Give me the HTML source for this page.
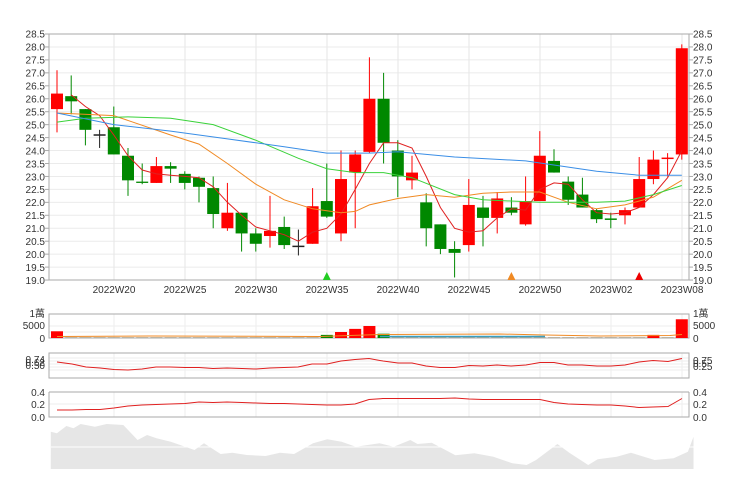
<!DOCTYPE html>
<html><head><meta charset="utf-8"><style>
html,body{margin:0;padding:0;background:#fff;width:740px;height:495px;overflow:hidden}
svg{display:block}
text{font-family:"Liberation Sans","Noto Sans CJK TC",sans-serif;font-size:10px;fill:#333}
</style></head><body>
<svg id="s" width="740" height="495" xmlns="http://www.w3.org/2000/svg">
<g id="grid"></g>
<g text-anchor="end">
<text x="45" y="37.5">28.5</text><text x="45" y="50.5">28.0</text><text x="45" y="63.5">27.5</text><text x="45" y="76.5">27.0</text><text x="45" y="89.5">26.5</text><text x="45" y="102.5">26.0</text><text x="45" y="115.5">25.5</text><text x="45" y="128.5">25.0</text><text x="45" y="141.5">24.5</text><text x="45" y="154.5">24.0</text><text x="45" y="167.5">23.5</text><text x="45" y="180.5">23.0</text><text x="45" y="193">22.5</text><text x="45" y="206">22.0</text><text x="45" y="219">21.5</text><text x="45" y="232">21.0</text><text x="45" y="245">20.5</text><text x="45" y="258">20.0</text><text x="45" y="271">19.5</text><text x="45" y="284">19.0</text>
<text x="45" y="317">1萬</text><text x="45" y="329">5000</text><text x="45" y="342">0</text>
<text x="45" y="363" font-size="9">0.74</text><text x="45" y="366" font-size="9">0.62</text><text x="45" y="369" font-size="9">0.50</text>
<text x="45" y="396">0.4</text><text x="45" y="408">0.2</text><text x="45" y="421">0.0</text>
</g>
<g>
<text x="693" y="37.5">28.5</text><text x="693" y="50.5">28.0</text><text x="693" y="63.5">27.5</text><text x="693" y="76.5">27.0</text><text x="693" y="89.5">26.5</text><text x="693" y="102.5">26.0</text><text x="693" y="115.5">25.5</text><text x="693" y="128.5">25.0</text><text x="693" y="141.5">24.5</text><text x="693" y="154.5">24.0</text><text x="693" y="167.5">23.5</text><text x="693" y="180.5">23.0</text><text x="693" y="193">22.5</text><text x="693" y="206">22.0</text><text x="693" y="219">21.5</text><text x="693" y="232">21.0</text><text x="693" y="245">20.5</text><text x="693" y="258">20.0</text><text x="693" y="271">19.5</text><text x="693" y="284">19.0</text>
<text x="693" y="317">1萬</text><text x="693" y="329">5000</text><text x="693" y="342">0</text>
<text x="693" y="364" font-size="9">0.75</text><text x="693" y="367" font-size="9">0.5</text><text x="693" y="370" font-size="9">0.25</text>
<text x="693" y="396">0.4</text><text x="693" y="408">0.2</text><text x="693" y="421">0.0</text>
</g>
<g text-anchor="middle">
<text x="114" y="293">2022W20</text><text x="185" y="293">2022W25</text><text x="256" y="293">2022W30</text><text x="327" y="293">2022W35</text><text x="398" y="293">2022W40</text><text x="469" y="293">2022W45</text><text x="540" y="293">2022W50</text><text x="611" y="293">2023W02</text><text x="682" y="293">2023W08</text>
</g>
<g id="plot"></g>
</svg>
<script>
var NS="http://www.w3.org/2000/svg",g=document.getElementById('grid'),P=document.getElementById('plot');
function el(p,t,a){var e=document.createElementNS(NS,t);for(var k in a)e.setAttribute(k,a[k]);p.appendChild(e);return e;}
function Y(p){return 34+(28.5-p)*25.9;}
function X(i){return 57+i*14.2;}
// grids
for(var v=19;v<=28.5;v+=0.5)el(g,'line',{x1:49,x2:689,y1:Y(v),y2:Y(v),stroke:'#ebebeb'});
var vx=[114,185,256,327,398,469,540,611,682];
vx.forEach(function(x){el(g,'line',{x1:x,x2:x,y1:34,y2:280,stroke:'#e6e6e6'});
 el(g,'line',{x1:x,x2:x,y1:314,y2:338,stroke:'#eee'});el(g,'line',{x1:x,x2:x,y1:353,y2:378,stroke:'#eee'});el(g,'line',{x1:x,x2:x,y1:392,y2:417,stroke:'#eee'});});
[326,332].forEach(function(y){el(g,'line',{x1:49,x2:689,y1:y,y2:y,stroke:'#eee'});});
[358,361,364,367,370].forEach(function(y){el(g,'line',{x1:49,x2:689,y1:y,y2:y,stroke:'#eee'});});
[404].forEach(function(y){el(g,'line',{x1:49,x2:689,y1:y,y2:y,stroke:'#eee'});});
// frames
el(g,'path',{d:'M49 34H689M49 34V280H689V34',fill:'none',stroke:'#aaa'});
for(var v=19;v<=28.5;v+=0.5){el(g,'line',{x1:45,x2:49,y1:Y(v),y2:Y(v),stroke:'#aaa'});el(g,'line',{x1:689,x2:693,y1:Y(v),y2:Y(v),stroke:'#aaa'});}
el(g,'rect',{x:49,y:314,width:640,height:24,fill:'none',stroke:'#aaa'});
el(g,'rect',{x:49,y:353,width:640,height:25,fill:'none',stroke:'#aaa'});
el(g,'path',{d:'M49 392V417H689V392M49 392H689',fill:'none',stroke:'#aaa'});
// area
var ar=[[107,395],[120,400],[140,378],[155,385],[170,372],[200,380],[225,372],[260,375],[290,420],[310,405],[330,415],[360,425],[410,450],[430,430],[465,462],[490,458],[520,465],[560,468],[590,458],[620,462],[660,430],[690,418],[720,425],[750,440],[800,430],[830,440],[865,420],[880,432],[910,428],[960,466],[1000,460],[1040,470],[1080,490],[1110,495],[1130,480],[1175,432],[1200,458],[1240,495],[1260,478],[1300,470],[1330,458],[1380,480],[1420,475],[1450,455],[1462,410]];
var d='M'+(107/2.108)+' 469';ar.forEach(function(p){d+=' L'+(p[0]/2.108).toFixed(1)+' '+(300+p[1]/3).toFixed(1);});d+=' L'+(1462/2.108)+' 469Z';
el(P,'path',{d:d,fill:'#e6e6e6'});
el(P,'line',{x1:51,x2:694,y1:447,y2:447,stroke:'#fff','stroke-width':1});
// candles [o,c,h,l,color]
var R='#f00',G='#080',K='#222';
var c=[[25.6,26.2,27.1,24.7,R],[26.1,25.9,26.9,25.4,G],[25.6,24.8,25.6,24.2,G],[24.6,24.6,24.8,24.1,K],[24.9,23.85,25.7,23.85,G],[23.8,22.85,24.1,22.25,G],[22.8,22.75,23.5,22.7,G],[22.75,23.4,23.75,22.75,R],[23.4,23.3,23.55,22.75,G],[23.1,22.75,23.2,22.5,G],[22.95,22.6,23.0,22.0,G],[22.55,21.55,23.0,21.0,G],[21.0,21.6,22.75,20.9,R],[21.6,20.8,21.6,20.1,G],[20.8,20.4,21.0,20.1,G],[20.7,20.9,22.25,20.25,R],[21.05,20.35,21.45,20.2,G],[20.3,20.3,20.95,19.95,K],[20.4,21.85,22.55,20.4,R],[22.05,21.45,23.5,21.4,G],[20.8,22.9,24.0,20.5,R],[23.15,23.85,24.0,21.0,R],[23.95,26.0,27.6,23.9,R],[26.0,24.3,27.0,23.5,G],[24.0,23.0,24.4,22.2,G],[22.85,23.15,23.8,22.5,R],[22.0,21.0,22.35,20.3,G],[21.15,20.2,21.15,20.0,G],[20.2,20.05,20.5,19.1,G],[20.35,21.9,22.9,20.1,R],[21.8,21.4,22.25,20.3,G],[21.4,22.15,22.4,20.8,R],[21.8,21.6,22.2,21.5,G],[21.15,22.05,23.0,21.1,R],[22.05,23.8,24.75,22.05,R],[23.6,23.15,24.05,23.15,G],[22.8,22.1,23.0,21.9,G],[22.3,21.8,22.95,21.8,G],[21.7,21.35,21.75,21.2,G],[21.35,21.35,21.6,21.0,G],[21.5,21.7,21.8,21.15,R],[21.8,22.9,23.75,21.8,R],[22.9,23.65,24.0,22.7,R],[23.7,23.7,23.9,23.0,R],[23.85,27.95,28.1,23.65,R]];
c.forEach(function(k,i){var x=X(i),t=Math.max(k[0],k[1]),b=Math.min(k[0],k[1]);
 el(P,'line',{x1:x,x2:x,y1:Y(k[2]),y2:Y(k[3]),stroke:k[4],'stroke-width':1});
 if(t-b<0.02){el(P,'line',{x1:x-6,x2:x+6,y1:Y(t),y2:Y(t),stroke:k[4],'stroke-width':1.5});}
 else el(P,'rect',{x:x-6,y:Y(t),width:12,height:Y(b)-Y(t),fill:k[4]});});
function line(pts,col,w){var d='';pts.forEach(function(p,j){d+=(j?'L':'M')+X(p[0]).toFixed(1)+' '+Y(p[1]).toFixed(1);});el(P,'path',{d:d,fill:'none',stroke:col,'stroke-width':w||1});}
var red=[26.15,25.7,25.35,24.6,23.8,23.25,23.1,23.05,23.0,22.95,22.6,22.0,21.5,21.05,20.9,20.75,20.5,20.85,21.0,21.55,22.5,23.5,24.3,24.3,24.1,23.0,21.8,21.0,20.85,20.9,21.4,21.75,21.7,22.5,22.75,22.7,22.1,21.6,21.55,21.6,21.8,22.3,22.95,24.0];
line(red.map(function(v,i){return[i+1,v]}),'#e02020');
line([[0,25.45],[4,25.35],[8,24.6],[10,24.25],[12,23.5],[14,22.7],[16,22.1],[18,21.75],[20,21.6],[21,21.65],[22,21.9],[24,22.15],[26,22.3],[28,22.2],[30,22.35],[32,22.4],[34,22.4],[36,22.0],[38,21.75],[40,21.9],[42,22.2],[44,22.85]],'#f08a24');
line([[0,25.1],[2,25.25],[5,25.3],[8,25.25],[11,25.0],[14,24.4],[17,23.7],[19,23.3],[21,23.15],[23,23.15],[25,22.95],[28,22.3],[30,22.1],[34,22.0],[38,22.0],[40,22.05],[42,22.3],[44,22.65]],'#3ad23a');
line([[0,25.45],[4,25.0],[8,24.75],[12,24.45],[16,24.15],[19,23.9],[22,23.9],[24,23.95],[28,23.75],[33,23.6],[38,23.2],[41,23.05],[44,23.05]],'#3a8ee6');
// triangles
[[19,'#2c2'],[32,'#f08a24'],[41,'#e00']].forEach(function(t){var x=X(t[0]);el(P,'path',{d:'M'+(x-4)+' 280L'+x+' 272L'+(x+4)+' 280Z',fill:t[1]});});
// volume
function VY(v){return 338-v*0.0024;}
var vb=[[0,2800,R],[19,1300,G],[20,2500,R],[21,3800,R],[22,5000,R],[23,1800,G],[42,1300,R],[44,7800,R]];
for(var i=1;i<45;i++){el(P,'rect',{x:X(i)-6,y:VY(300),width:12,height:VY(0)-VY(300),fill:'#8a7a55',opacity:0.6});}
vb.forEach(function(b){el(P,'rect',{x:X(b[0])-6,y:VY(b[1]),width:12,height:VY(0)-VY(b[1]),fill:b[2]});});
el(P,'path',{d:'M57 336.5L150 336L320 336.5L380 334.5L500 334L545 335L600 336L670 335.5L682 334.5',fill:'none',stroke:'#f08a24'});
el(P,'path',{d:'M380 336.5L545 336.5',fill:'none',stroke:'#3a9fc0','stroke-width':1.5});
// panel 2 line
var p2=[[57,362],[72,364],[86,367],[100,368],[114,369.5],[128,370],[142,369],[156,367],[170,367],[185,367.5],[199,367.5],[213,368.5],[227,368],[242,368.5],[256,369],[270,368],[284,367.5],[298,367],[312,364],[327,364],[341,361],[355,359.5],[369,358.5],[383,361],[398,363],[412,363],[426,366],[440,367.5],[455,367.5],[469,365.5],[483,366],[497,365],[511,366],[526,365],[540,362.5],[554,362.5],[568,365],[582,365],[597,366],[611,366],[625,365],[639,362],[653,360.5],[668,361.5],[682,358.5]];
el(P,'polyline',{points:p2.map(function(p){return p.join(',')}).join(' '),fill:'none',stroke:'#e02020'});
var p3=[[57,410],[72,410],[86,409.5],[100,409.5],[114,408],[128,406],[142,405],[156,404.5],[170,404],[185,403.5],[199,402],[213,402.5],[227,402],[242,402.5],[256,403],[270,403.5],[284,403.5],[298,404],[312,404.5],[327,405],[341,405],[355,404],[369,399.5],[383,398.5],[398,398.5],[412,398.5],[426,398.5],[440,398.5],[455,398],[469,399],[483,399.5],[497,399.5],[511,399.5],[526,399.5],[540,399.5],[554,402.5],[568,404],[582,404.5],[597,405],[611,405],[625,406],[639,407.5],[653,407],[668,406.5],[682,398.5]];
el(P,'polyline',{points:p3.map(function(p){return p.join(',')}).join(' '),fill:'none',stroke:'#e02020'});
</script>
</body></html>
